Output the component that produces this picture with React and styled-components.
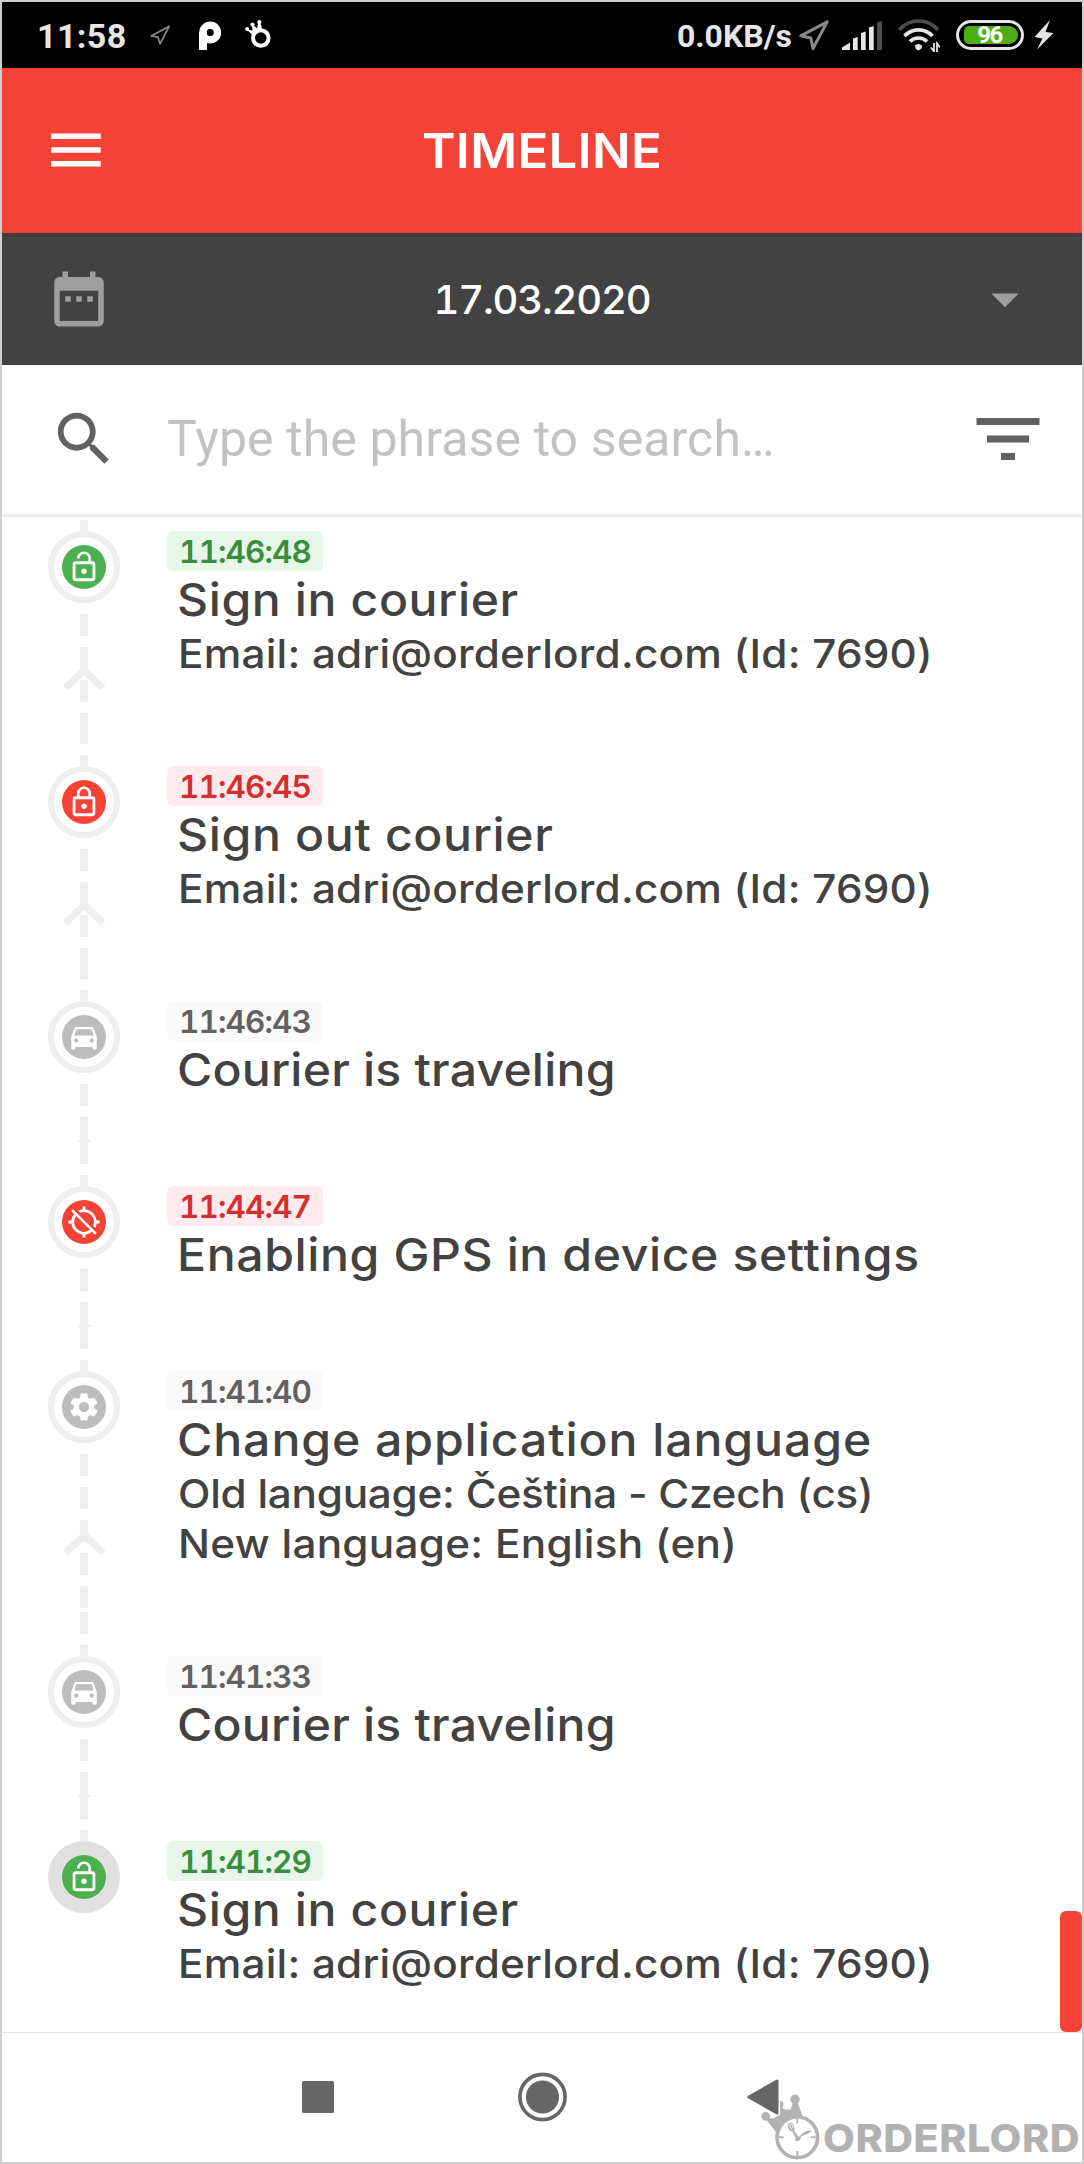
import React from 'react';
import styled, { createGlobalStyle } from 'styled-components';
import {
  MdMenu,
  MdDateRange,
  MdArrowDropDown,
  MdSearch,
  MdFilterList,
  MdLockOpen,
  MdLockOutline,
  MdDirectionsCar,
  MdLocationDisabled,
  MdSettings,
} from 'react-icons/md';

const GlobalStyle = createGlobalStyle`
  * { box-sizing: border-box; }
  body { margin: 0; background: #fff; }
  svg { display: block; flex: none; }
`;

const Screen = styled.div`
  position: relative;
  display: flex;
  flex-direction: column;
  width: 1084px;
  height: 2164px;
  overflow: hidden;
  border: 2px solid #d0d0d0;
  background: #fff;
  color: #424242;
  font-family: Inter, 'Open Sans', sans-serif;
`;

/* ---------- status bar ---------- */

const StatusBar = styled.div`
  display: flex;
  justify-content: space-between;
  flex: none;
  height: 66px;
  padding: 0 28px 0 35px;
  background: #000;
  color: #e6e6e6;
  font-family: Roboto, sans-serif;
`;

const StatusGroup = styled.div`
  display: flex;
  align-items: center;
`;

const StatusIcon = styled.svg`
  margin-left: ${(p) => p.$gap}px;
`;

const Clock = styled.span`
  width: 90px;
  padding-top: 2px;
  font-size: 34px;
  font-weight: 700;
  letter-spacing: 0.4px;
`;

const NetSpeed = styled.span`
  padding-top: 1px;
  font-size: 32px;
  font-weight: 700;
`;

const Battery = styled.div`
  display: flex;
  width: 68px;
  height: 30px;
  margin: 0 10px 0 16px;
  padding: 3px 3px 3px 5px;
  border: 3px solid #e6e6e6;
  border-radius: 15px;
`;

const Charge = styled.div`
  display: flex;
  align-items: center;
  justify-content: center;
  width: 54px;
  height: 18px;
  padding-right: 3px;
  border-radius: 5px 9px 9px 5px;
  background: #4caf13;
  color: #fff;
  font-size: 24px;
  font-weight: 700;
  line-height: 18px;
  letter-spacing: -1.5px;
`;

/* ---------- header, date and search ---------- */

const Header = styled.header`
  display: grid;
  grid-template-columns: 66px 1fr 66px;
  align-items: center;
  flex: none;
  height: 165px;
  padding: 0 41px 1px;
  background: #f44336;
  color: #fff;
`;

const Title = styled.h1`
  margin: 0;
  text-align: center;
  font-size: 47.5px;
  font-weight: 600;
  letter-spacing: 0.3px;
  transform: scaleX(1.07);
`;

const DateBar = styled.div`
  display: grid;
  grid-template-columns: 66px 1fr 66px;
  align-items: center;
  flex: none;
  height: 132px;
  padding: 0 44px;
  background: #424242;
  box-shadow: inset 0 5px 4px -3px rgba(0, 0, 0, 0.12);
  color: #9e9e9e;
`;

const DateText = styled.span`
  text-align: center;
  color: #fff;
  font-size: 40px;
  font-weight: 500;
  font-variant-numeric: tabular-nums;
  letter-spacing: -1.2px;
`;

const SearchBar = styled.div`
  display: flex;
  align-items: center;
  flex: none;
  height: 152px;
  padding: 0 32px 1px 47px;
  border-bottom: 3px solid #eee;
  color: #616161;
`;

const Placeholder = styled.span`
  flex: 1;
  margin-left: 48px;
  color: #c2c2c2;
  font: 400 50px/58px Roboto, sans-serif;
  letter-spacing: 0.1px;
`;

/* ---------- timeline ---------- */

const Timeline = styled.main`
  position: relative;
  flex: 1;
  padding-top: 3px;
  overflow: hidden;
`;

const Entry = styled.article`
  display: flex;
  height: ${(p) => 185 + p.$lines * 50}px;
`;

const Rail = styled.div`
  display: flex;
  flex-direction: column;
  align-items: center;
  width: 72px;
  margin-left: 46px;
`;

const Stub = styled.div`
  flex: none;
  width: 8px;
  height: 11px;
  background: #eee;
`;

const Node = styled.div`
  display: flex;
  flex: none;
  width: 72px;
  height: 72px;
  padding: 8px;
  border: 6px solid ${(p) => (p.$last ? '#e0e0e0' : '#eee')};
  border-radius: 50%;
  background: ${(p) => (p.$last ? '#e0e0e0' : '#fff')};
`;

const Disc = styled.div`
  display: flex;
  align-items: center;
  justify-content: center;
  width: 44px;
  height: 44px;
  border-radius: 50%;
  background: ${(p) => p.$color};
  color: #fff;
`;

const Track = styled.div`
  display: flex;
  flex: 1;
  justify-content: center;
  width: 44px;
  padding-top: ${(p) => p.$arrowTop}px;
  overflow: hidden;
  background:
    linear-gradient(#eee, #eee) center bottom 11px / 8px 22px no-repeat,
    repeating-linear-gradient(transparent 0 11px, #eee 11px 33px) center top / 8px ${(p) => p.$dashes * 33}px no-repeat;
`;

const ArrowClip = styled.div`
  height: ${(p) => p.$height}px;
  overflow: hidden;
`;

const Body = styled.div`
  padding: 11px 0 0 47px;
`;

const Badge = styled.div`
  width: 156px;
  height: 40px;
  border-radius: 6px;
  background: ${(p) => p.$bg};
  color: ${(p) => p.$color};
  text-align: center;
  font-size: 31.5px;
  font-weight: 600;
  line-height: 41px;
  font-variant-numeric: tabular-nums;
  letter-spacing: -0.9px;
`;

const EntryTitle = styled.h2`
  margin: 0 0 0 10px;
  white-space: nowrap;
  font-size: 45px;
  font-weight: 500;
  line-height: 58px;
  letter-spacing: ${(p) => p.$spacing}px;
  transform: scaleX(1.07);
  transform-origin: left;
`;

const Detail = styled.div`
  margin-left: 11px;
  white-space: nowrap;
  font-size: 39.5px;
  font-weight: 500;
  line-height: 50px;
  letter-spacing: ${(p) => p.$spacing}px;
  transform: scaleX(1.07);
  transform-origin: left;
`;

const ScrollThumb = styled.div`
  position: absolute;
  right: 0;
  bottom: 0;
  width: 22px;
  height: 121px;
  border-radius: 6px;
  background: #f44336;
`;

/* ---------- navigation and watermark ---------- */

const NavBar = styled.nav`
  display: flex;
  align-items: center;
  flex: none;
  gap: 164px;
  height: 130px;
  padding: 0 0 2px 286px;
  border-top: 1px solid #e0e0e0;
`;

const NavKey = styled.svg`
  position: relative;
  z-index: 2;
  overflow: visible;
`;

const Watermark = styled.div`
  position: absolute;
  right: 0;
  bottom: 0;
  z-index: 1;
  display: flex;
  width: 325px;
  height: 72px;
  color: #b2b2b2;
`;

const Brand = styled.span`
  margin: 34px 0 0 1px;
  font-size: 38.5px;
  font-weight: 800;
  line-height: 28px;
  letter-spacing: 0.5px;
  transform: scaleX(1.07);
  transform-origin: left;
`;

const tones = {
  green: { disc: '#4caf50', bg: '#e8f5e9', color: '#388e3c' },
  red: { disc: '#f44336', bg: '#ffebee', color: '#d32f2f' },
  gray: { disc: '#bdbdbd', bg: '#fafafa', color: '#616161' },
};

const email = { text: 'Email: adri@orderlord.com (Id: 7690)', spacing: 0.2 };

const entries = [
  { time: '11:46:48', tone: 'green', icon: MdLockOpen, title: 'Sign in courier', spacing: 0.55, details: [email] },
  { time: '11:46:45', tone: 'red', icon: MdLockOutline, title: 'Sign out courier', spacing: 0.6, details: [email] },
  { time: '11:46:43', tone: 'gray', icon: MdDirectionsCar, title: 'Courier is traveling', spacing: 0.18, details: [] },
  { time: '11:44:47', tone: 'red', icon: MdLocationDisabled, title: 'Enabling GPS in device settings', spacing: 0.56, details: [] },
  {
    time: '11:41:40',
    tone: 'gray',
    icon: MdSettings,
    title: 'Change application language',
    spacing: 0.86,
    details: [
      { text: 'Old language: Čeština - Czech (cs)', spacing: -0.24 },
      { text: 'New language: English (en)', spacing: 0.25 },
    ],
  },
  { time: '11:41:33', tone: 'gray', icon: MdDirectionsCar, title: 'Courier is traveling', spacing: 0.18, details: [] },
  { time: '11:41:29', tone: 'green', icon: MdLockOpen, title: 'Sign in courier', spacing: 0.55, details: [email] },
];

const dashesFor = [2, 4, 5];
const arrowTopFor = [63, 63, 88];

function TimelineEntry({ entry, last }) {
  const tone = tones[entry.tone];
  const Icon = entry.icon;
  const lines = entry.details.length;
  return (
    <Entry $lines={lines}>
      <Rail>
        <Stub />
        <Node $last={last}>
          <Disc $color={tone.disc}>
            <Icon size={34} />
          </Disc>
        </Node>
        {!last && (
          <Track $dashes={dashesFor[lines]} $arrowTop={arrowTopFor[lines]}>
            <ArrowClip $height={lines ? 25 : 6}>
              <svg width="44" height="25" viewBox="0 0 44 25">
                <path d="M3.500 22 22.300 4 41 22" fill="none" stroke="#eee" strokeWidth="7" />
              </svg>
            </ArrowClip>
          </Track>
        )}
      </Rail>
      <Body>
        <Badge $bg={tone.bg} $color={tone.color}>{entry.time}</Badge>
        <EntryTitle $spacing={entry.spacing}>{entry.title}</EntryTitle>
        {entry.details.map((d) => (
          <Detail key={d.text} $spacing={d.spacing}>{d.text}</Detail>
        ))}
      </Body>
    </Entry>
  );
}

export default function App() {
  return (
    <Screen>
      <GlobalStyle />
      <StatusBar>
        <StatusGroup>
          <Clock>11:58</Clock>
          <StatusIcon $gap={23} width="21" height="20" viewBox="0 0 21 20" fill="none" stroke="#8a8a8a" strokeWidth="1.7" strokeLinejoin="round">
            <path d="M1.2 11 19.2 1.3 10 18.8 8 12.2z" />
          </StatusIcon>
          <StatusIcon $gap={28} width="22" height="29" viewBox="0 0 22 29">
            <circle cx="11.2" cy="11.5" r="7.3" fill="none" stroke="#fff" strokeWidth="7.4" />
            <rect x="0" y="11" width="8" height="18" fill="#fff" />
          </StatusIcon>
          <StatusIcon $gap={24} width="26" height="30" viewBox="0 0 26 30" fill="#fff">
            <circle cx="15.8" cy="18" r="7.8" fill="none" stroke="#fff" strokeWidth="4" />
            <circle cx="2.2" cy="9" r="2.1" />
            <circle cx="7.5" cy="4.6" r="2.1" />
            <circle cx="14.3" cy="2.1" r="2.1" />
            <path d="M1.500 9.500 7.500 15 11 12.500 17.500 10.500 15.300 2h-1.800L12 8.500 8.500 5l-1.500.5.5 5z" />
          </StatusIcon>
        </StatusGroup>
        <StatusGroup>
          <NetSpeed>0.0KB/s</NetSpeed>
          <StatusIcon $gap={7} width="30" height="32" viewBox="0 0 30 32" fill="none" stroke="#8a8a8a" strokeWidth="3" strokeLinejoin="round">
            <path d="M1.800 16.800 28.200 2.800 14 29.500 11.800 19z" />
          </StatusIcon>
          <StatusIcon $gap={13} width="40" height="29" viewBox="0 0 40 29" fill="#e6e6e6">
            <path d="M0 29v-2.500L8 21.500V29zM11 29V17.500l4.700-1.500v13zM19 29V12l4.700-1.500V29zM27 29V6.500L31.700 5v24z" />
            <path d="M35 29V1.500L40 0v29z" fill="#4d4d4d" />
          </StatusIcon>
          <StatusIcon $gap={15} width="43" height="33" viewBox="0 0 43 33" fill="none" stroke="#e6e6e6" strokeWidth="3.6">
            <path d="M2.200 11A25.500 25.500 0 0 1 41 11" stroke="#4d4d4d" />
            <path d="M7.500 17A19 19 0 0 1 35.500 17" />
            <path d="M13 22.500A12 12 0 0 1 30 22.500" />
            <path d="M17.800 26.500 21.500 24.700l3.700 1.800-1 3.500-2.700 1.500-2.700-1.500z" fill="#e6e6e6" stroke="none" />
            <path d="M37 24v8.500l-3-4M40 33v-8.500l3 4" strokeWidth="1.800" />
          </StatusIcon>
          <Battery>
            <Charge>96</Charge>
          </Battery>
          <svg width="20" height="30" viewBox="0 0 20 30" fill="#e6e6e6">
            <path d="M16 0 .5 17l8 1.500L3 29.500 19.500 13l-8-1z" />
          </svg>
        </StatusGroup>
      </StatusBar>

      <Header>
        <MdMenu size={66} />
        <Title>TIMELINE</Title>
      </Header>

      <DateBar>
        <MdDateRange size={66} />
        <DateText>17.03.2020</DateText>
        <MdArrowDropDown size={66} />
      </DateBar>

      <SearchBar>
        <MdSearch size={70} />
        <Placeholder>Type the phrase to search…</Placeholder>
        <MdFilterList size={84} />
      </SearchBar>

      <Timeline>
        {entries.map((entry, i) => (
          <TimelineEntry key={entry.time} entry={entry} last={i === entries.length - 1} />
        ))}
        <ScrollThumb />
      </Timeline>

      <NavBar>
        <NavKey width="60" height="60" viewBox="0 0 60 60">
          <rect x="14" y="14" width="32" height="32" rx="1.500" fill="#666" />
        </NavKey>
        <NavKey width="60" height="60" viewBox="0 0 60 60">
          <circle cx="30.500" cy="30" r="22.600" fill="none" stroke="#666" strokeWidth="3.600" />
          <circle cx="30.500" cy="30" r="16.600" fill="#666" />
        </NavKey>
        <NavKey width="60" height="60" viewBox="0 0 60 60" strokeLinejoin="round">
          <path d="M13 30 41 14v32z" fill="#fff" stroke="#fff" strokeWidth="6" />
          <path d="M13 30 41 14v32z" fill="#666" stroke="#666" strokeWidth="3" />
        </NavKey>
      </NavBar>

      <Watermark>
        <svg width="65" height="72" viewBox="0 0 65 72" fill="#b2b2b2">
          <circle cx="8.700" cy="26.300" r="4.400" />
          <circle cx="22.300" cy="14.700" r="4.200" />
          <circle cx="38" cy="9.300" r="4.700" />
          <path d="M8 28 19.700 43 40 40 45.500 26 40 11h-3.500l-3 8.500h-6L24 17h-3.500l.5 8.500Q17 29.500 12 28z" />
          <circle cx="40.300" cy="47.300" r="20.300" fill="#fff" stroke="#b2b2b2" strokeWidth="3.600" />
          <path d="M40.300 29v4.500M40.300 61v4.500M22 47.300h4.500M54 47.300h4.500" stroke="#b2b2b2" strokeWidth="2" />
          <path d="M38.500 48 35.500 42Q31.500 41 30.500 35l1.300-1.700 3.500-.6Q38.500 38 37 41l5 6Q49 39 55 41q-4 3-11 5.500-.5 4.500-3.700 5-3-.5-1.800-3.500z" />
          <path d="m32.300 34.500 2.500 5M34.300 33.700l2 4.500" stroke="#fff" strokeWidth=".8" />
        </svg>
        <Brand>ORDERLORD</Brand>
      </Watermark>
    </Screen>
  );
}
